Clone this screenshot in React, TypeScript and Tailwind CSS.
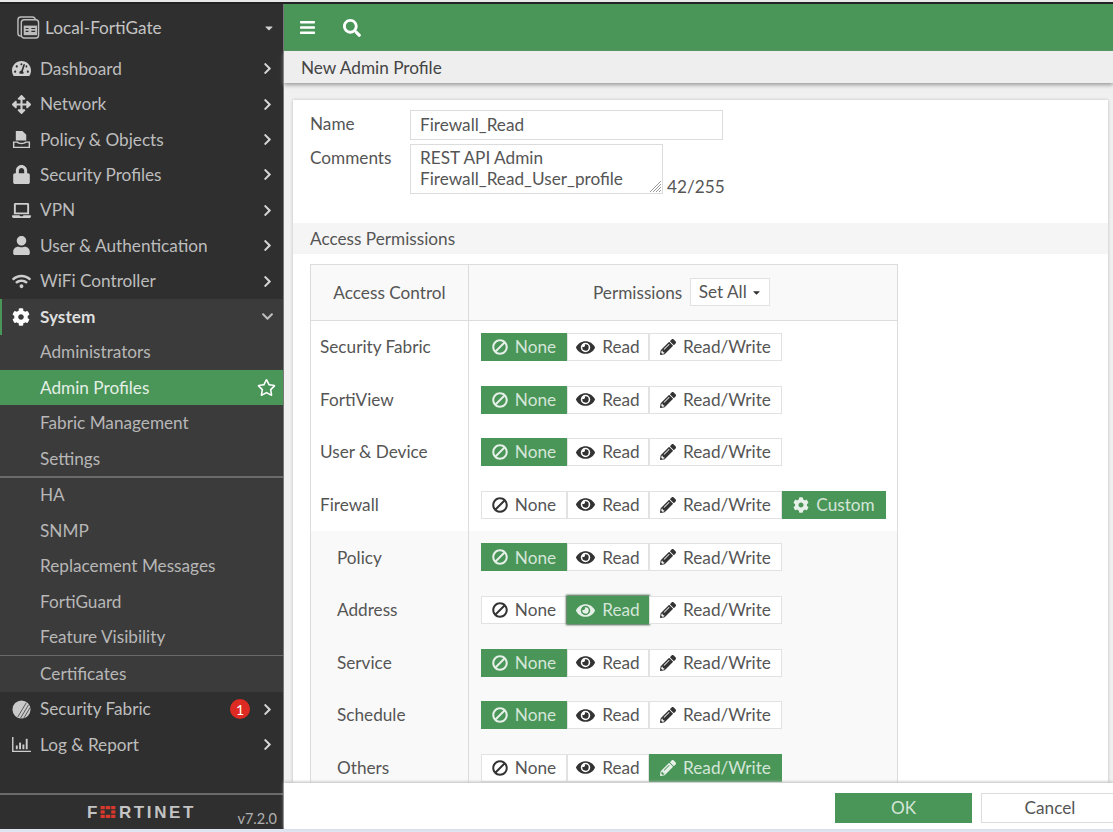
import React from 'react'
import {
  FaBan, FaBars, FaChevronDown, FaChevronRight, FaCog, FaEye, FaLaptop, FaLock,
  FaPencilAlt, FaRegStar, FaSearch, FaTachometerAlt, FaUser, FaWifi, FaArrowsAlt, FaCaretDown,
} from 'react-icons/fa'

const GREEN = 'bg-[#4a9558]'

const PolicyIcon = () => (
  <svg viewBox="0 0 20 20" className="h-[19px] w-[19px]" fill="currentColor">
    <path d="M4 1h7l4 4v6H4z" />
    <path d="M1 12h5c1 2 7 2 8 0h5v7H1zM2.500 13.500v4h15v-4h-2.500c-1.500 2-8.500 2-10 0z" fillRule="evenodd" />
  </svg>
)

const FabricIcon = () => (
  <svg viewBox="0 0 20 20" className="h-[19px] w-[19px]">
    <circle cx="10" cy="10" r="9.500" fill="#c9c9c9" />
    <path d="M6 18 15 3M9 19 17.500 5M12.500 19 19 8" stroke="#555" strokeWidth="1" />
  </svg>
)

const ReportIcon = () => (
  <svg viewBox="0 0 20 18" className="h-[17px] w-[19px]" fill="currentColor">
    <path d="M0 1h1.500v14.500H20V17H0z" />
    <rect x="4" y="10" width="2" height="4" />
    <rect x="7.500" y="7" width="2" height="7" />
    <rect x="11" y="9" width="2" height="5" />
    <rect x="14.500" y="3" width="2" height="11" />
  </svg>
)

const DeviceIcon = () => (
  <svg viewBox="0 0 24 24" className="h-[23px] w-[23px]" fill="none" stroke="#bdbdbd" strokeWidth="1.500">
    <rect x="1" y="1" width="18" height="20" rx="3" />
    <rect x="4.500" y="4" width="18" height="19" rx="3" fill="#2f2f2f" />
    <rect x="7" y="10" width="14" height="10" fill="#bdbdbd" stroke="none" />
    <path d="M9 13h3M9 16h3M15 13h4M15 16h4" stroke="#2f2f2f" strokeWidth="1.200" />
  </svg>
)

const Logo = () => (
  <span className="flex items-center text-[17px] leading-none font-black tracking-[2.6px] text-[#c4c4c4] font-['Liberation_Sans',sans-serif]">
    F
    <svg viewBox="0 0 16 13" className="mr-[3px] h-[12px] w-[16px]" fill="#d9382c">
      <rect x="0" y="0" width="4.500" height="3.500" />
      <rect x="5.500" y="0" width="5" height="3.500" />
      <rect x="11.500" y="0" width="4.500" height="3.500" />
      <rect x="0" y="4.700" width="4.500" height="3.500" />
      <rect x="11.500" y="4.700" width="4.500" height="3.500" />
      <rect x="0" y="9.500" width="4.500" height="3.500" />
      <rect x="5.500" y="9.500" width="5" height="3.500" />
      <rect x="11.500" y="9.500" width="4.500" height="3.500" />
    </svg>
    RTINET
  </span>
)

const NavRow = ({ icon, label, badge }: { icon: React.ReactNode; label: string; badge?: boolean }) => (
  <div className="flex h-[35.4px] items-center text-[#bdbdbd]">
    <span className="flex w-[40px] shrink-0 justify-center pl-[2px] text-[19px] text-[#cfcfcf]">{icon}</span>
    <span className="flex-1">{label}</span>
    {badge && (
      <span className="mr-[11px] flex h-[20px] w-[20px] items-center justify-center rounded-full bg-[#dd2a23] text-[14px] text-white">1</span>
    )}
    <FaChevronRight className="mr-[9px] text-[13px] text-[#d6d6d6]" />
  </div>
)

const SubRow = ({ label }: { label: string }) => (
  <div className="flex h-[35.4px] items-center pl-[40px] text-[#b7b7b7]">{label}</div>
)

const Divider = () => <div className="h-[1.5px] bg-[#6a6a6a]" />

type Perm = 'None' | 'Read' | 'Read/Write' | 'Custom'

const permStyles: Record<Perm, { width: string; icon: React.ReactNode }> = {
  None: { width: 'w-[86px]', icon: <FaBan className="-scale-x-100 text-[16px]" /> },
  Read: { width: 'w-[82px]', icon: <FaEye className="text-[19px]" /> },
  'Read/Write': { width: 'w-[133px]', icon: <FaPencilAlt className="text-[16px]" /> },
  Custom: { width: 'w-[104px]', icon: <FaCog className="text-[16px]" /> },
}

const PermGroup = ({ active, custom }: { active: Perm; custom?: boolean }) => {
  const opts: Perm[] = custom ? ['None', 'Read', 'Read/Write', 'Custom'] : ['None', 'Read', 'Read/Write']
  return (
    <div className="flex h-[28px]">
      {opts.map((o) => (
        <div
          key={o}
          className={
            o === active
              ? `${permStyles[o].width} ${GREEN} flex items-center justify-center gap-[7px] text-[#d4e6d8]${o === 'Read' ? ' shadow-[0_0_2px_1px_#3b5f43]' : ''}`
              : `${permStyles[o].width} flex items-center justify-center gap-[7px] border border-[#e2e2e2] bg-white text-[#555]`
          }
        >
          <span className={o === active ? 'text-[#e6f0e8]' : 'text-[#333]'}>{permStyles[o].icon}</span>
          {o}
        </div>
      ))}
    </div>
  )
}

const PermRow = ({ label, active, custom, sub }: { label: string; active: Perm; custom?: boolean; sub?: boolean }) => (
  <div className="flex h-[52.6px]">
    <div className={sub ? 'flex w-[158px] items-center border-r border-[#dcdcdc] bg-[#f9f9f9] pl-[26px] text-[#555]' : 'flex w-[158px] items-center border-r border-[#dcdcdc] pl-[9px] text-[#555]'}>
      {label}
    </div>
    <div className={sub ? 'flex flex-1 items-center bg-[#f9f9f9] pl-[12px]' : 'flex flex-1 items-center pl-[12px]'}>
      <PermGroup active={active} custom={custom} />
    </div>
  </div>
)

export default function App() {
  return (
    <div className="flex h-[832px] w-[1113px] flex-col overflow-hidden bg-[#dfe6f2] text-[17.2px] font-['Lato',sans-serif]">
      <div className="h-[4px] shrink-0 border-b-[2px] border-[#222] bg-[#e8e8e8]" />
      <div className="flex h-[825px] shrink-0">
        <aside className="flex w-[284px] shrink-0 flex-col border-r border-[#777] bg-[#2f2f2f]">
          <div className="flex h-[47px] shrink-0 items-center pl-[17px] pr-[8px] text-[#c4c4c4]">
            <DeviceIcon />
            <span className="ml-[5px] flex-1">Local-FortiGate</span>
            <FaCaretDown className="text-[12px] text-[#d0d0d0]" />
          </div>
          <NavRow icon={<FaTachometerAlt />} label="Dashboard" />
          <NavRow icon={<FaArrowsAlt />} label="Network" />
          <NavRow icon={<PolicyIcon />} label="Policy & Objects" />
          <NavRow icon={<FaLock />} label="Security Profiles" />
          <NavRow icon={<FaLaptop />} label="VPN" />
          <NavRow icon={<FaUser />} label="User & Authentication" />
          <NavRow icon={<FaWifi />} label="WiFi Controller" />
          <div className="bg-[#3b3b3b]">
            <div className="flex h-[35.9px] items-center border-l-[2px] border-[#4a9558] font-bold text-[#dedede]">
              <span className="flex w-[38px] shrink-0 justify-center text-[18px] text-white"><FaCog /></span>
              <span className="flex-1">System</span>
              <FaChevronDown className="mr-[9px] text-[13px] text-[#bdbdbd]" />
            </div>
            <SubRow label="Administrators" />
            <div className={`flex h-[35.4px] items-center pl-[40px] pr-[7px] text-[#e4efe6] ${GREEN}`}>
              <span className="flex-1">Admin Profiles</span>
              <FaRegStar className="text-[19px] text-white" />
            </div>
            <SubRow label="Fabric Management" />
            <SubRow label="Settings" />
            <Divider />
            <SubRow label="HA" />
            <SubRow label="SNMP" />
            <SubRow label="Replacement Messages" />
            <SubRow label="FortiGuard" />
            <SubRow label="Feature Visibility" />
            <Divider />
            <SubRow label="Certificates" />
          </div>
          <NavRow icon={<FabricIcon />} label="Security Fabric" badge />
          <NavRow icon={<ReportIcon />} label="Log & Report" />
          <div className="flex-1" />
          <div className="flex h-[36px] shrink-0 items-center border-t-[2px] border-[#6a6a6a] pr-[6px]">
            <span className="ml-[87px] flex-1"><Logo /></span>
            <span className="pt-[14px] text-[14.5px] text-[#b0b0b0]">v7.2.0</span>
          </div>
        </aside>
        <main className="flex min-w-0 flex-1 flex-col bg-white">
          <div className={`flex h-[47px] shrink-0 items-center gap-[27px] pl-[15px] text-white ${GREEN}`}>
            <FaBars className="text-[17px]" />
            <FaSearch className="text-[18px]" />
          </div>
          <div className="relative z-10 flex h-[32px] shrink-0 items-center bg-[#eeeeee] pl-[17px] pt-[2px] text-[#444] shadow-[0_2px_4px_#999]">New Admin Profile</div>
          <div className="min-h-0 flex-1 overflow-hidden bg-[#f0f0f0] pl-[9px] pr-[5px] pt-[17px]">
            <div className="h-[700px] bg-white shadow-[0_0_3px_#bbb]">
              <div className="h-[123px] pl-[17px] pt-[10px] text-[#555]">
                <div className="flex h-[30px] items-center">
                  <span className="w-[100px] pb-[3px]">Name</span>
                  <div className="flex h-[30px] w-[313px] items-center border border-[#dcdcdc] pl-[9px]">Firewall_Read</div>
                </div>
                <div className="mt-[4px] flex">
                  <span className="w-[100px] pt-[1px]">Comments</span>
                  <div className="relative h-[50px] w-[253px] border border-[#dcdcdc] pl-[9px] pt-[2px] leading-[21px]">
                    REST API Admin
                    <br />
                    Firewall_Read_User_profile
                    <svg viewBox="0 0 12 12" className="absolute bottom-[1px] right-[1px] h-[12px] w-[12px]" stroke="#999" strokeWidth="1">
                      <path d="M1 12 12 1M4 12l8-8M7 12l5-5M10 12l2-2" />
                    </svg>
                  </div>
                  <span className="ml-[4px] mt-[32px] leading-[21px]">42/255</span>
                </div>
              </div>
              <div className="flex h-[31px] items-center bg-[#f5f5f5] pl-[17px] text-[#555]">Access Permissions</div>
              <div className="ml-[17px] mt-[10px] w-[588px] border-x border-[#dcdcdc]">
                <div className="flex h-[56.8px] border-y border-[#dcdcdc] bg-[#f9f9f9] text-[#555]">
                  <div className="flex w-[158px] items-center justify-center border-r border-[#dcdcdc]">Access Control</div>
                  <div className="flex flex-1 items-center pl-[124px]">
                    Permissions
                    <div className="ml-[8px] flex h-[28px] w-[80px] items-center justify-center gap-[4px] border border-[#e2e2e2] bg-white">
                      Set All <FaCaretDown className="text-[11px] text-[#333]" />
                    </div>
                  </div>
                </div>
                <PermRow label="Security Fabric" active="None" />
                <PermRow label="FortiView" active="None" />
                <PermRow label="User & Device" active="None" />
                <PermRow label="Firewall" active="Custom" custom />
                <PermRow label="Policy" active="None" sub />
                <PermRow label="Address" active="Read" sub />
                <PermRow label="Service" active="None" sub />
                <PermRow label="Schedule" active="None" sub />
                <PermRow label="Others" active="Read/Write" sub />
              </div>
            </div>
          </div>
          <div className="z-10 flex h-[46px] shrink-0 items-center bg-white pl-[551px] pt-[4px] shadow-[0_-1px_3px_#bbb]">
            <div className={`flex h-[30px] w-[137px] shrink-0 items-center justify-center text-[#d4e6d8] ${GREEN}`}>OK</div>
            <div className="ml-[9px] flex h-[30px] w-[138px] shrink-0 items-center justify-center border border-[#dcdcdc] bg-white text-[#555]">Cancel</div>
          </div>
        </main>
      </div>
    </div>
  )
}
